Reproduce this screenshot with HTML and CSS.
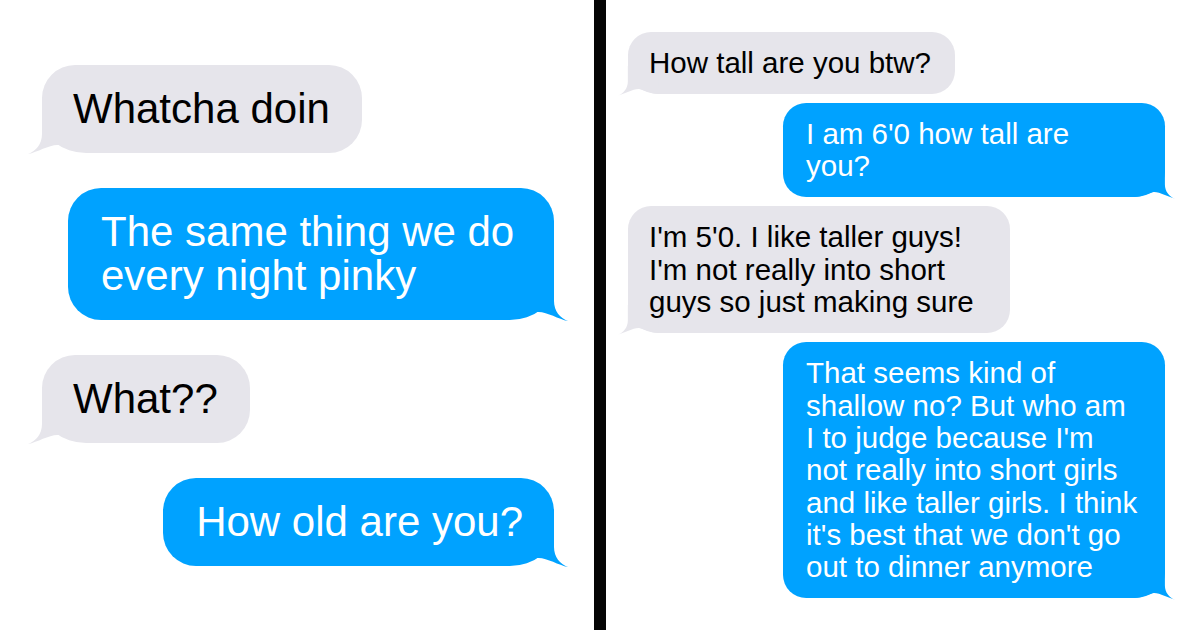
FILE: index.html
```html
<!DOCTYPE html>
<html lang="en">
<head>
<meta charset="utf-8">
<title>Messages</title>
<link rel="stylesheet" href="styles.css">
</head>
<body>
  <section class="panel panel-left">
    <div class="bubble in">Whatcha doin<svg class="tail" viewBox="-44 -40 58 43"><path d="M-44 -40H0V-18C0 -8 6 -1 14 2C4 0 -8 -8 -17 -7C-24 -6 -32 -1 -44 0Z"/></svg></div>
    <div class="bubble out w-wide-left">The same thing we do<br>every night pinky<svg class="tail" viewBox="-44 -40 58 43"><path d="M-44 -40H0V-18C0 -8 6 -1 14 2C4 0 -8 -8 -17 -7C-24 -6 -32 -1 -44 0Z"/></svg></div>
    <div class="bubble in">What??<svg class="tail" viewBox="-44 -40 58 43"><path d="M-44 -40H0V-18C0 -8 6 -1 14 2C4 0 -8 -8 -17 -7C-24 -6 -32 -1 -44 0Z"/></svg></div>
    <div class="bubble out">How old are you?<svg class="tail" viewBox="-44 -40 58 43"><path d="M-44 -40H0V-18C0 -8 6 -1 14 2C4 0 -8 -8 -17 -7C-24 -6 -32 -1 -44 0Z"/></svg></div>
  </section>
  <div class="divider"></div>
  <section class="panel panel-right">
    <div class="bubble in">How tall are you btw?<svg class="tail" viewBox="-44 -40 58 43"><path d="M-44 -40H0V-18C0 -8 6 -1 14 2C4 0 -8 -8 -17 -7C-24 -6 -32 -1 -44 0Z"/></svg></div>
    <div class="bubble out w-wide-right">I am 6'0 how tall are<br>you?<svg class="tail" viewBox="-44 -40 58 43"><path d="M-44 -40H0V-18C0 -8 6 -1 14 2C4 0 -8 -8 -17 -7C-24 -6 -32 -1 -44 0Z"/></svg></div>
    <div class="bubble in w-wide-right">I'm 5'0. I like taller guys!<br>I'm not really into short<br>guys so just making sure<svg class="tail" viewBox="-44 -40 58 43"><path d="M-44 -40H0V-18C0 -8 6 -1 14 2C4 0 -8 -8 -17 -7C-24 -6 -32 -1 -44 0Z"/></svg></div>
    <div class="bubble out w-wide-right">That seems kind of<br>shallow no? But who am<br>I to judge because I'm<br>not really into short girls<br>and like taller girls. I think<br>it's best that we don't go<br>out to dinner anymore<svg class="tail" viewBox="-44 -40 58 43"><path d="M-44 -40H0V-18C0 -8 6 -1 14 2C4 0 -8 -8 -17 -7C-24 -6 -32 -1 -44 0Z"/></svg></div>
  </section>
</body>
</html>
```

FILE: styles.css
```css
* {
  box-sizing: border-box;
  margin: 0;
  padding: 0;
}

html,
body {
  width: 1200px;
  height: 630px;
  overflow: hidden;
}

body {
  background: #ffffff;
  font-family: "Liberation Sans", Arial, sans-serif;
  display: flex;
}

.panel {
  width: 594px;
  height: 630px;
  display: flex;
  flex-direction: column;
  justify-content: center;
  flex: none;
}

.panel-left {
  padding: 0 40px 0 42px;
  gap: 35px;
  font-size: 42px;
  line-height: 44px;
}

.divider {
  width: 12px;
  height: 630px;
  background: #050505;
  flex: none;
}

.panel-right {
  padding: 0 35px 0 22px;
  gap: 9px;
  font-size: 29.5px;
  line-height: 32.3px;
}

.bubble {
  position: relative;
  isolation: isolate;
  border-radius: 0.786em;
  white-space: nowrap;
}

.panel-left .bubble {
  padding: 22px 32px 22px 31px;
}

.panel-right .bubble {
  padding: 15px 24px 15px 21px;
}

.in {
  align-self: flex-start;
  background: #e6e5eb;
  color: #000000;
  border-bottom-left-radius: 1.05em 0.857em;
}

.out {
  align-self: flex-end;
  background: #00a2ff;
  color: #ffffff;
  border-bottom-right-radius: 1.05em 0.857em;
}

.panel-left .out {
  padding-left: 33px;
  padding-right: 31px;
}

.panel-right .out {
  padding-left: 23px;
}

.w-wide-left {
  width: 486px;
}

.w-wide-right {
  width: 382px;
}

.tail {
  position: absolute;
  z-index: -1;
  bottom: -0.0714em;
  width: 1.381em;
  height: 1.024em;
  display: block;
}

.out .tail {
  right: -0.333em;
  fill: #00a2ff;
}

.in .tail {
  left: -0.333em;
  fill: #e6e5eb;
  transform: scaleX(-1);
}
```
